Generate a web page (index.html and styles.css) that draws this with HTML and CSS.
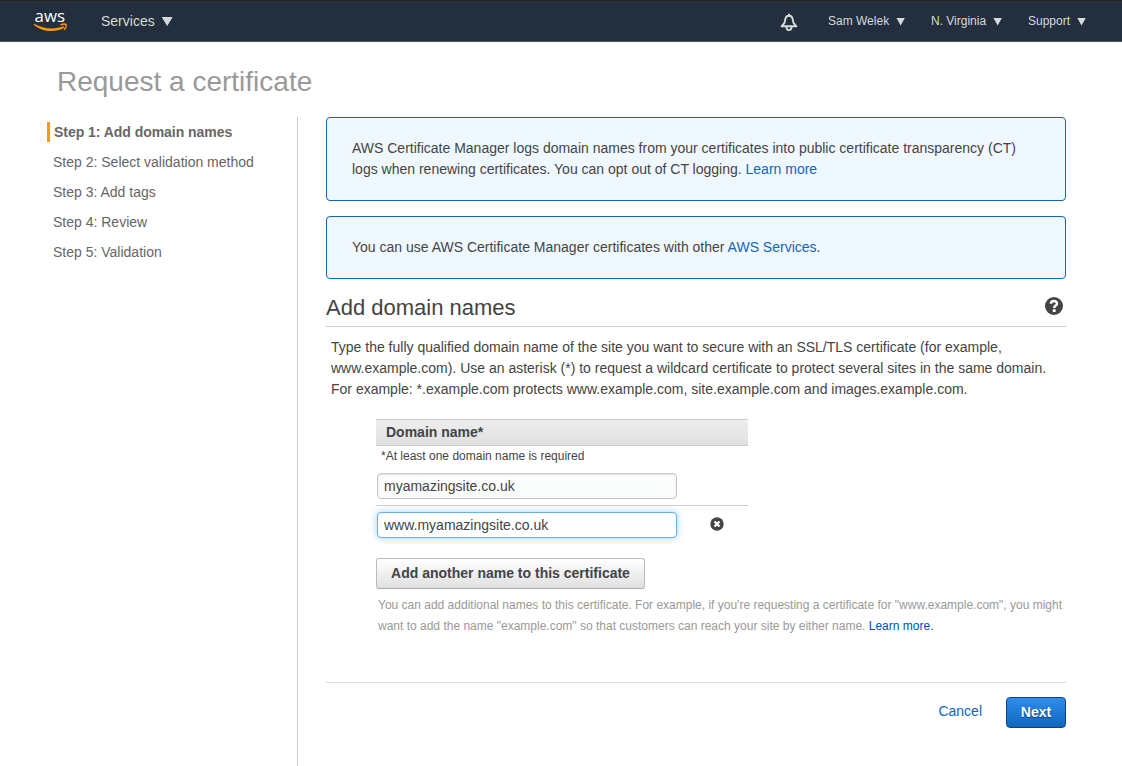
FILE: index.html
```html
<!DOCTYPE html>
<html lang="en">
<head>
<meta charset="utf-8">
<title>Request a certificate</title>
<link rel="stylesheet" href="styles.css">
</head>
<body>
<header class="topbar">
  <svg class="logo" width="36" height="28" viewBox="0 -4 36 28" aria-label="aws">
    <text class="logo-text" x="1.6" y="12.500" textLength="30.5" lengthAdjust="spacingAndGlyphs">aws</text>
    <path d="M.5 15.400C9 23.200 22 24 31.200 18.800L30.400 17.200C22 20.600 10.500 20.200 1.100 14.700Z" fill="#f90"/>
    <path d="M27.500 16C29.500 15 32.200 15 33 15.500C33.500 16.800 32.400 19.500 31.200 20.700" fill="none" stroke="#f90" stroke-width="1.500"/>
  </svg>
  <a class="nav services">Services<span class="caret"></span></a>
  <svg class="bell" width="18" height="20" viewBox="0 0 18 20" fill="none" stroke="#d5dbdb" stroke-width="1.900">
    <path d="M1.600 13.300L4.500 9.800L5.500 5.500C6 3.500 7.300 2.800 9 2.800S12 3.500 12.500 5.500L13.500 9.800L16.400 13.300Z" stroke-linejoin="round"/>
    <path d="M9 .8V3M6.500 14C6.500 18.200 11.500 18.200 11.500 14"/>
  </svg>
  <a class="nav user">Sam Welek<span class="caret small"></span></a>
  <a class="nav region">N. Virginia<span class="caret small"></span></a>
  <a class="nav support">Support<span class="caret small"></span></a>
</header>
<h1 class="title">Request a certificate</h1>
<div class="layout">
  <nav class="steps">
    <div class="step active">Step 1: Add domain names</div>
    <div class="step">Step 2: Select validation method</div>
    <div class="step">Step 3: Add tags</div>
    <div class="step">Step 4: Review</div>
    <div class="step">Step 5: Validation</div>
  </nav>
  <main class="content">
    <div class="notice">AWS Certificate Manager logs domain names from your certificates into public certificate transparency (CT)<br>logs when renewing certificates. You can opt out of CT logging. <a class="link">Learn more</a></div>
    <div class="notice single">You can use AWS Certificate Manager certificates with other <a class="link">AWS Services</a>.</div>
    <div class="section-head">
      <h2 class="section-title">Add domain names</h2>
      <svg class="help" width="18" height="18" viewBox="0 0 18 18">
        <circle cx="9" cy="9" r="9" fill="#444"/>
        <path d="M5.900 6.800C6 3.200 12 3.300 12 6.500C12 8.800 9.200 8.400 9.200 11" fill="none" stroke="#fff" stroke-width="2.500"/>
        <path d="M7.800 12.200H10.600V15H7.800Z" fill="#fff"/>
      </svg>
    </div>
    <p class="intro">Type the fully qualified domain name of the site you want to secure with an SSL/TLS certificate (for example,<br>www.example.com). Use an asterisk (*) to request a wildcard certificate to protect several sites in the same domain.<br>For example: *.example.com protects www.example.com, site.example.com and images.example.com.</p>
    <div class="domains">
      <div class="table-head">Domain name*</div>
      <div class="required">*At least one domain name is required</div>
      <div class="row first"><input class="field" value="myamazingsite.co.uk"></div>
      <div class="row">
        <input class="field focused" value="www.myamazingsite.co.uk">
        <svg class="remove" width="14" height="14" viewBox="0 0 14 14">
          <circle cx="7" cy="7" r="6.700" fill="#444"/>
          <path d="M4.500 4.500L9.500 9.500M9.500 4.500L4.500 9.500" stroke="#fff" stroke-width="2.200"/>
        </svg>
      </div>
    </div>
    <button class="add">Add another name to this certificate</button>
    <p class="hint">You can add additional names to this certificate. For example, if you're requesting a certificate for "www.example.com", you might<br>want to add the name "example.com" so that customers can reach your site by either name. <a class="link strong">Learn more.</a></p>
    <div class="actions">
      <a class="link cancel">Cancel</a>
      <button class="next">Next</button>
    </div>
  </main>
</div>
</body>
</html>
```
FILE: styles.css
```css
* { box-sizing: border-box; }
body {
  margin: 0;
  height: 766px;
  display: flex;
  flex-direction: column;
  overflow: hidden;
  background: #fff;
  color: #444;
  font: 14px/21px "Liberation Sans", Arial, sans-serif;
}
.topbar {
  display: flex;
  flex: none;
  height: 42px;
  padding-left: 33px;
  background: #232f3e;
  border-top: 1px solid #222;
  border-bottom: 1px solid #4a545f;
  color: #d5dbdb;
}
.logo { margin-top: 4px; overflow: visible; }
.logo-text { font: 500 17px "Open Sans", sans-serif; fill: #fff; }
.nav { display: flex; align-items: center; height: 40px; padding-top: 1px; font-size: 12px; white-space: nowrap; }
.services { margin-left: 32px; width: 680px; font-size: 14px; }
.caret {
  width: 11px;
  height: 9px;
  margin-left: 7px;
  background: #d5dbdb;
  clip-path: polygon(0 0, 100% 0, 50% 100%);
}
.caret.small { width: 9px; height: 8px; margin-left: 7px; }
.bell { flex: none; margin: 12px 0 0 -1px; }
.user { width: 103px; margin-left: 30px; }
.region { width: 97px; }
.title { flex: none; margin: 22px 0 0 57px; font-size: 28px; line-height: 36px; font-weight: 400; color: #999; }
.layout { display: flex; flex: 1; margin-top: 17px; }
.steps { width: 298px; padding: 5px 0 0 47px; border-right: 1px solid #ccc; color: #666; }
.step { height: 20px; margin-bottom: 10px; padding-left: 6px; line-height: 20px; }
.step.active { padding-left: 4px; border-left: 3px solid #f90; font-weight: 700; letter-spacing: -.04px; }
.content { width: 740px; margin-left: 28px; }
.notice {
  height: 84px;
  padding: 20px 25px;
  border: 1px solid #1166bb;
  border-radius: 4px;
  background: #f0f8ff;
  white-space: nowrap;
}
.notice.single { height: 63px; margin-top: 15px; }
.link { color: #1166bb; }
.link.strong { color: #0050b0; }
.section-head { display: flex; justify-content: space-between; height: 48px; padding: 15px 3px 0 0; border-bottom: 1px solid #ccc; }
.section-title { margin: 0; font-size: 22px; line-height: 28px; font-weight: 400; }
.help { margin-top: 3px; }
.intro { margin: 10px 0 0 5px; white-space: nowrap; }
.domains { width: 372px; margin: 19px 0 0 50px; }
.table-head {
  height: 27px;
  padding-left: 10px;
  border: solid #ccc;
  border-width: 1px 0;
  background: linear-gradient(#eee, #e0e0e0);
  font-weight: 700;
  line-height: 25px;
}
.required { height: 26px; padding-left: 5px; font-size: 12px; line-height: 21px; }
.row { display: flex; height: 34px; padding: 6px 0 0 1px; align-items: flex-start; }
.row.first { padding-top: 1px; border-bottom: 1px solid #ccc; }
.field {
  width: 300px;
  height: 26px;
  padding: 0 6px;
  border: 1px solid #c4c4c4;
  border-radius: 4px;
  outline: 0;
  background: #fafcfb;
  box-shadow: inset 0 1px 2px #e4e4e4;
  color: #444;
  font: inherit;
}
.field.focused { border-color: #66afe9; background: #fff; box-shadow: 0 0 7px rgba(102, 175, 233, .6); }
.remove { margin: 5px 0 0 33px; }
.add {
  display: block;
  width: 269px;
  height: 31px;
  margin: 18px 0 0 50px;
  padding: 0 0 2px;
  border: 1px solid #bbb;
  border-bottom-color: #aaa;
  border-radius: 3px;
  background: linear-gradient(#fff, #e0e0e0);
  color: #444;
  font: 700 14px "Liberation Sans", Arial, sans-serif;
}
.hint { margin: 6px 0 0 52px; color: #999; font-size: 12px; white-space: nowrap; }
.actions { display: flex; justify-content: flex-end; height: 46px; margin-top: 45px; padding-top: 14px; border-top: 1px solid #ddd; }
.cancel { margin: 4px 24px 0 0; }
.next {
  width: 60px;
  height: 31px;
  padding: 0 0 2px;
  border: 1px solid #0b4680;
  border-radius: 4px;
  background: linear-gradient(#2f8ded, #1166bb);
  color: #fff;
  font: 700 14px "Liberation Sans", Arial, sans-serif;
  text-shadow: 0 1px 1px #063562;
}
```
